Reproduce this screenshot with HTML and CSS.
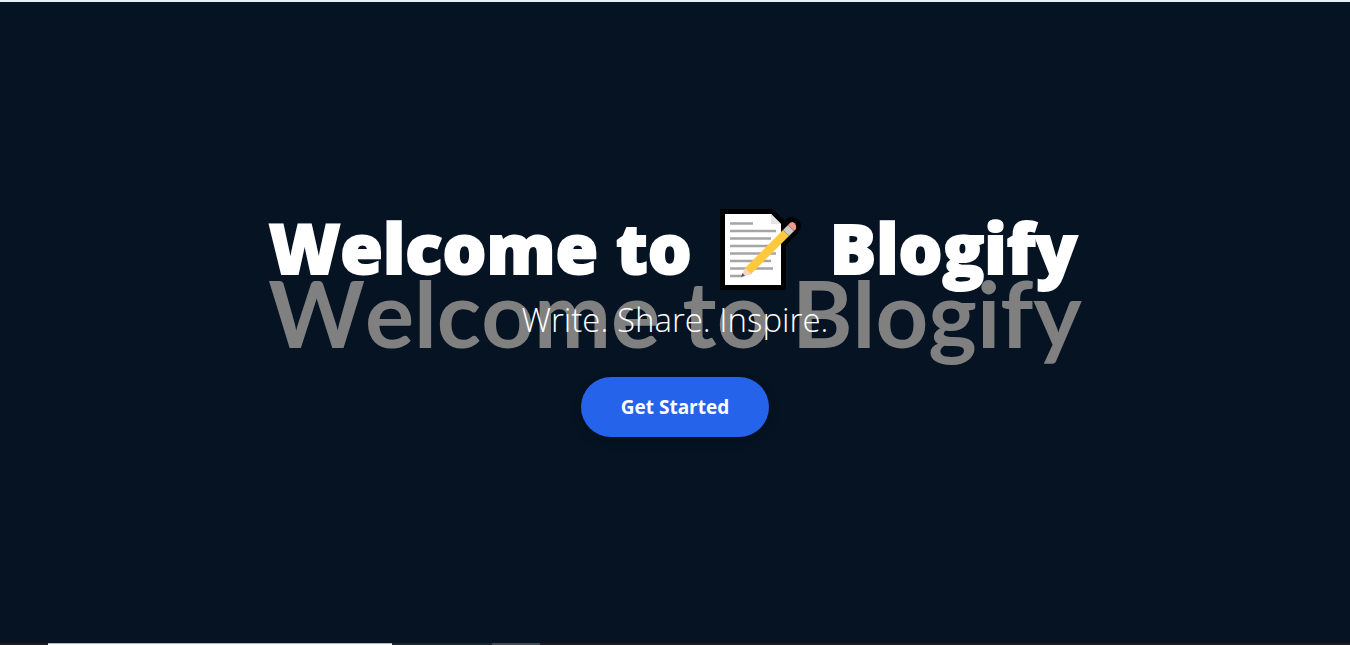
FILE: index.html
```html
<!DOCTYPE html>
<html lang="en">
<head>
<meta charset="utf-8">
<meta name="viewport" content="width=device-width, initial-scale=1">
<title>Blogify</title>
<link rel="stylesheet" href="styles.css">
</head>
<body>
<main class="hero">
  <p class="hero-backdrop">Welcome to Blogify</p>
  <div class="hero-content">
    <h1 class="hero-title">
      <span>Welcome to</span>
      <svg class="memo" viewBox="0 0 82 82" role="img" aria-label="Memo">
        <path d="M0 0H53L65 12A9 9 0 0 1 78 24L66 36V81H0Z" fill="#000"/>
        <circle cx="72" cy="17" r="9" fill="#000"/>
        <path d="M5 5H51L61 15V76H5Z" fill="#fff"/>
        <path d="M51 5V15H61Z" fill="#e5e5e5"/>
        <path d="M10 14.500H33M10 22H56M10 29.500H51M10 37H56M10 44.500H56M10 52H51M10 59.500H53M10 67H22" stroke="#a5a5a5" stroke-width="2.600"/>
        <path d="M21 68L25 59L32 65Z" fill="#f5d5c5"/>
        <path d="M21 68L22.500 64L25 67Z" fill="#555"/>
        <path d="M25 59L63 21L69 27L31 65Z" fill="#ffc83d"/>
        <path d="M63 21L68 16L74 22L69 27Z" fill="#cbcbcb"/>
        <path d="M68 16L70.500 13.500Q73 12 75 14.500Q77 17 76 20L74 22Z" fill="#ef9a8d"/>
      </svg>
      <span>Blogify</span>
    </h1>
    <p class="hero-tagline">Write. Share. Inspire.</p>
    <button class="hero-button" type="button">Get Started</button>
  </div>
</main>
<footer class="taskbar"><span class="taskbar-window"></span><span class="taskbar-space"></span><span class="taskbar-app"></span></footer>
</body>
</html>
```
FILE: styles.css
```css
* { box-sizing: border-box; }
body {
  margin: 0;
  min-height: 100vh;
  display: flex;
  flex-direction: column;
  background: #051322;
  border-top: 2px solid #e8f1f8;
  color: #fff;
  font-family: "Open Sans", sans-serif;
}
.hero {
  position: relative;
  flex: 1;
  display: flex;
  align-items: center;
  justify-content: center;
}
.hero-backdrop {
  position: absolute;
  inset: 0;
  margin: 0;
  padding-bottom: 20px;
  display: flex;
  align-items: center;
  justify-content: center;
  color: #808080;
  font: 700 92px/1 Lato, sans-serif;
  font-kerning: none;
  white-space: nowrap;
}
.hero-content {
  position: relative;
  display: flex;
  flex-direction: column;
  align-items: center;
}
.hero-title {
  margin: 0;
  padding-right: 4px;
  display: flex;
  align-items: flex-start;
  gap: 28px;
  font-size: 69px;
  font-weight: 800;
  line-height: 76px;
  white-space: nowrap;
  -webkit-text-stroke: 2px #fff;
}
.memo { width: 82px; height: 82px; }
.hero-tagline {
  margin: 9px 0 37px;
  font-size: 33px;
  font-weight: 300;
  line-height: 40px;
}
.hero-button {
  border: 0;
  border-radius: 30px;
  padding: 16px 40px;
  background: #2563eb;
  box-shadow: 0 4px 12px rgba(0, 0, 0, 0.1);
  color: #fff;
  font: 700 19px/28px "Open Sans", sans-serif;
}
.taskbar {
  display: flex;
  height: 2px;
  padding-left: 48px;
  background: #211c1f;
}
.taskbar-window { width: 344px; background: #f8f8f5; border-top: 1px solid #b8b8b8; }
.taskbar-space { width: 100px; background: #1b262c; }
.taskbar-app { width: 48px; background: #454b4f; }
```
